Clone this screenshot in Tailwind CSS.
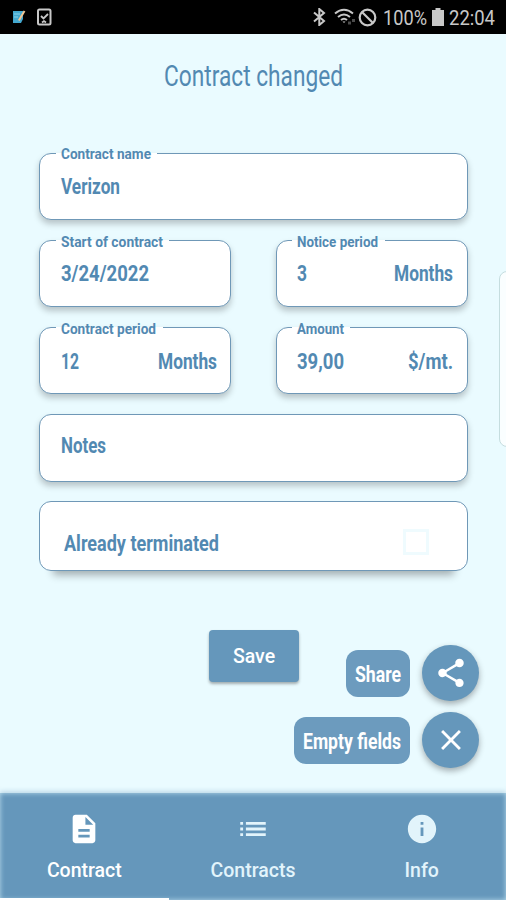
<!DOCTYPE html>
<html lang="en">
  <head>
    <meta charset="UTF-8" />
    <meta name="viewport" content="width=device-width, initial-scale=1.0" />
    <title>Contract changed</title>
    <script src="https://cdn.jsdelivr.net/npm/@tailwindcss/browser@4"></script>
  </head>
  <body class="relative flex h-[900px] w-[506px] flex-col overflow-hidden bg-[#eafbff] font-['Roboto',sans-serif] text-[#5289b2]">
    <!-- status bar -->
    <div class="flex h-[34px] shrink-0 items-center bg-black pl-3 text-[#c8c8c8]">
      <svg class="h-[18px] w-[14px]" viewBox="0 0 14 18">
        <path d="M1 3h10v8l-2 4H1z" fill="#43a8cf" />
        <path d="M2 6h6M2 9h4" stroke="#8bd2e8" />
        <path d="M12.500 3 6.800 12.500" stroke="#f0c795" stroke-width="2" />
      </svg>
      <svg class="ml-[11px] h-[18px] w-[15px]" viewBox="0 0 15 18">
        <rect x="1" y="1.500" width="12.500" height="15" rx="1.500" fill="none" stroke="#c8c8c8" stroke-width="2" />
        <path d="m4 8 2.500 2.500L11 6M5 14.500l2-1.500 2 1.500" fill="none" stroke="#c8c8c8" stroke-width="1.800" />
      </svg>
      <svg class="ml-[261px] h-[18px] w-[13px]" viewBox="0 0 13 18">
        <path d="m1 4.500 10 8.500-4.700 4V1l4.700 4L1 13.500" fill="none" stroke="#c8c8c8" stroke-width="2" />
      </svg>
      <svg class="ml-[8px] h-[18px] w-[23px]" viewBox="0 0 23 18" fill="none" stroke="#c8c8c8" stroke-width="2">
        <path d="M1 5.500q9-7.500 18 0M4 9q6-5 12 0M7 12q3-2.500 6 0" />
        <path d="m8.500 13.500 1.500 1.500 1.500-1.500z" fill="#c8c8c8" stroke="none" />
        <path d="M14 15h3M18 12.500h3" stroke="#4b4b4b" stroke-width="3" />
      </svg>
      <svg class="ml-[1px] h-[19px] w-[19px]" viewBox="0 0 19 19" fill="none" stroke="#c8c8c8" stroke-width="2.200">
        <circle cx="9.500" cy="9.500" r="7.800" />
        <path d="m4 4 11 11" />
      </svg>
      <svg class="ml-[6px] h-[18px] w-[44px] overflow-visible" fill="currentColor">
        <text x="0" y="17" font-size="20.500" textLength="44" lengthAdjust="spacingAndGlyphs">100%</text>
      </svg>
      <svg class="ml-[5px] h-[18px] w-[12px]" viewBox="0 0 12 18">
        <path d="M3.500 0h5v2H12v16H0V2h3.500z" fill="#c8c8c8" />
      </svg>
      <svg class="ml-[5px] h-[18px] w-[46px] overflow-visible" fill="currentColor">
        <text x="0" y="17" font-size="20.500" textLength="46" lengthAdjust="spacingAndGlyphs">22:04</text>
      </svg>
    </div>

    <!-- title -->
    <h1 class="flex h-[119px] shrink-0 justify-center pt-[22px]">
      <svg class="h-[30px] w-[179px] overflow-visible" fill="currentColor">
        <text x="0" y="30" font-size="30" textLength="179" lengthAdjust="spacingAndGlyphs">Contract changed</text>
      </svg>
    </h1>

    <!-- form -->
    <main class="flex h-[640px] shrink-0 flex-col px-[39px] font-bold">
      <div class="relative h-[67px] w-[429px] rounded-xl border border-[#6f98b7] bg-white px-[21px] pt-5 shadow-[0_4px_6px_#00000038]">
        <span class="absolute -top-px left-4 h-px w-[101px] bg-white"></span>
        <svg class="absolute -top-[10px] left-[21px] h-4 w-[90px] overflow-visible" fill="currentColor">
          <text x="0" y="15" font-size="15.500" textLength="90" lengthAdjust="spacingAndGlyphs">Contract name</text>
        </svg>
        <svg class="h-5 w-[59px] overflow-visible" fill="currentColor">
          <text x="0" y="20" font-size="22" textLength="59" lengthAdjust="spacingAndGlyphs">Verizon</text>
        </svg>
      </div>

      <div class="mt-5 flex w-[429px] justify-between">
        <div class="relative h-[67px] w-[192px] rounded-xl border border-[#6f98b7] bg-white px-[21px] pt-5 shadow-[0_4px_6px_#00000038]">
          <span class="absolute -top-px left-4 h-px w-[113px] bg-white"></span>
          <svg class="absolute -top-[10px] left-[21px] h-4 w-[102px] overflow-visible" fill="currentColor">
            <text x="0" y="15.500" font-size="15.500" textLength="102" lengthAdjust="spacingAndGlyphs">Start of contract</text>
          </svg>
          <svg class="h-5 w-[88px] overflow-visible" fill="currentColor">
            <text x="0" y="20" font-size="22" textLength="88" lengthAdjust="spacingAndGlyphs">3/24/2022</text>
          </svg>
        </div>
        <div class="relative flex h-[67px] w-[192px] justify-between rounded-xl border border-[#6f98b7] bg-white pt-5 pr-[14px] pl-5 shadow-[0_4px_6px_#00000038]">
          <span class="absolute -top-px left-[15px] h-px w-[93px] bg-white"></span>
          <svg class="absolute -top-[10px] left-5 h-4 w-[81px] overflow-visible" fill="currentColor">
            <text x="0" y="15.500" font-size="15.500" textLength="81" lengthAdjust="spacingAndGlyphs">Notice period</text>
          </svg>
          <svg class="h-5 w-[10px] overflow-visible" fill="currentColor">
            <text x="0" y="20" font-size="22" textLength="10" lengthAdjust="spacingAndGlyphs">3</text>
          </svg>
          <svg class="h-5 w-[59px] overflow-visible" fill="currentColor">
            <text x="0" y="20" font-size="22" textLength="59" lengthAdjust="spacingAndGlyphs">Months</text>
          </svg>
        </div>
      </div>

      <div class="mt-5 flex w-[429px] justify-between">
        <div class="relative flex h-[67px] w-[192px] justify-between rounded-xl border border-[#6f98b7] bg-white pt-5 pr-[13px] pl-[21px] shadow-[0_4px_6px_#00000038]">
          <span class="absolute -top-px left-4 h-px w-[107px] bg-white"></span>
          <svg class="absolute -top-[10px] left-[21px] h-4 w-[95px] overflow-visible" fill="currentColor">
            <text x="0" y="15.500" font-size="15.500" textLength="95" lengthAdjust="spacingAndGlyphs">Contract period</text>
          </svg>
          <svg class="h-5 w-[18px] overflow-visible" fill="currentColor">
            <text x="0" y="20.500" font-size="22" textLength="18" lengthAdjust="spacingAndGlyphs">12</text>
          </svg>
          <svg class="h-5 w-[59px] overflow-visible" fill="currentColor">
            <text x="0" y="20.500" font-size="22" textLength="59" lengthAdjust="spacingAndGlyphs">Months</text>
          </svg>
        </div>
        <div class="relative flex h-[67px] w-[192px] justify-between rounded-xl border border-[#6f98b7] bg-white pt-5 pr-[14px] pl-5 shadow-[0_4px_6px_#00000038]">
          <span class="absolute -top-px left-[15px] h-px w-[58px] bg-white"></span>
          <svg class="absolute -top-[10px] left-5 h-4 w-[47px] overflow-visible" fill="currentColor">
            <text x="0" y="15.500" font-size="15.500" textLength="47" lengthAdjust="spacingAndGlyphs">Amount</text>
          </svg>
          <svg class="h-5 w-[47px] overflow-visible" fill="currentColor">
            <text x="0" y="20.500" font-size="22" textLength="47" lengthAdjust="spacingAndGlyphs">39,00</text>
          </svg>
          <svg class="h-5 w-[45px] overflow-visible" fill="currentColor">
            <text x="0" y="20.500" font-size="22" textLength="45" lengthAdjust="spacingAndGlyphs">$/mt.</text>
          </svg>
        </div>
      </div>

      <div class="mt-5 h-[68px] w-[429px] shrink-0 rounded-xl border border-[#6f98b7] bg-white px-[21px] pt-[18px] shadow-[0_4px_6px_#00000038]">
        <svg class="h-5 w-[45px] overflow-visible" fill="currentColor">
          <text x="0" y="20" font-size="22" textLength="45" lengthAdjust="spacingAndGlyphs">Notes</text>
        </svg>
      </div>

      <div class="mt-[19px] flex h-[70px] w-[429px] shrink-0 justify-between rounded-xl border border-[#6f98b7] bg-white pt-[27px] pr-[38px] pl-6 shadow-[0_18px_8px_-14px_#00000050]">
        <svg class="h-[22px] w-[155px] overflow-visible" fill="currentColor">
          <text x="0" y="22" font-size="22" textLength="155" lengthAdjust="spacingAndGlyphs">Already terminated</text>
        </svg>
        <span class="h-[26px] w-[26px] border-3 border-[#effbfe]"></span>
      </div>

      <!-- actions -->
      <div class="mt-[59px] flex">
        <button class="ml-[170px] h-[52px] w-[90px] shrink-0 rounded bg-[#6597bb] pt-px text-[19.5px] font-medium text-white shadow-[0_2px_3px_#00000050]">Save</button>
        <div class="mt-[15px] -mr-3 ml-auto flex shrink-0 flex-col items-end gap-[11px] text-white">
          <div class="-ml-[140px] flex items-center gap-3">
            <div class="flex h-[47px] w-[64px] items-center justify-center rounded-xl bg-[#6c9bbe]">
              <svg class="h-[22px] w-[46px] overflow-visible" fill="currentColor">
                <text x="0" y="20" font-size="22" textLength="46" lengthAdjust="spacingAndGlyphs">Share</text>
              </svg>
            </div>
            <div class="flex h-14 w-[57px] items-center justify-center rounded-full bg-[#6597bb] shadow-[0_3px_6px_#00000050]">
              <svg class="h-[34px] w-[34px]" viewBox="0 0 24 24" fill="#fff">
                <path d="M18 16.080c-.76 0-1.440.3-1.960.77L8.910 12.700c.05-.23.09-.46.09-.7s-.04-.47-.09-.7l7.050-4.110c.54.5 1.250.81 2.040.81 1.660 0 3-1.340 3-3s-1.340-3-3-3-3 1.340-3 3c0 .24.04.47.09.7L8.040 9.810C7.500 9.310 6.790 9 6 9c-1.660 0-3 1.340-3 3s1.340 3 3 3c.79 0 1.500-.31 2.040-.81l7.120 4.160c-.05.21-.08.43-.08.65 0 1.610 1.310 2.920 2.920 2.920s2.920-1.310 2.920-2.920-1.310-2.920-2.920-2.920z" />
              </svg>
            </div>
          </div>
          <div class="-ml-[140px] flex items-center gap-3">
            <div class="flex h-[47px] w-[116px] items-center justify-center rounded-xl bg-[#6c9bbe]">
              <svg class="h-[22px] w-[98px] overflow-visible" fill="currentColor">
                <text x="0" y="20" font-size="22" textLength="98" lengthAdjust="spacingAndGlyphs">Empty fields</text>
              </svg>
            </div>
            <div class="flex h-14 w-[57px] items-center justify-center rounded-full bg-[#6597bb] shadow-[0_3px_6px_#00000050]">
              <svg class="h-[34px] w-[34px]" viewBox="0 0 24 24" fill="#fff">
                <path d="M19 6.410 17.590 5 12 10.590 6.410 5 5 6.410 10.590 12 5 17.590 6.410 19 12 13.410 17.590 19 19 17.590 13.410 12z" />
              </svg>
            </div>
          </div>
        </div>
      </div>
    </main>

    <!-- edge panel handle -->
    <div class="absolute top-[271px] left-[499px] h-[176px] w-5 rounded-lg border border-[#c5dddf] bg-[#fafeff]"></div>

    <!-- bottom navigation -->
    <nav class="relative grid h-[107px] shrink-0 grid-cols-3 bg-[#6597bb] text-[19.5px] font-medium text-[#e2f4fb] shadow-[0_-1px_5px_#6597bb70,inset_0_0_5px_#b9dcec]">
      <div class="flex flex-col items-center border-b-2 border-white pt-[19px] text-white">
        <svg class="h-[34px] w-[34px]" viewBox="0 0 24 24" fill="currentColor">
          <path d="M14 2H6c-1.100 0-1.990.9-1.990 2L4 20c0 1.100.89 2 1.990 2H18c1.100 0 2-.9 2-2V8l-6-6zm2 16H8v-2h8v2zm0-4H8v-2h8v2zm-3-5V3.500L18.500 9H13z" />
        </svg>
        <span class="mt-[11px] leading-7">Contract</span>
      </div>
      <div class="flex flex-col items-center pt-[19px]">
        <svg class="h-[34px] w-[34px]" viewBox="0 0 24 24" fill="currentColor">
          <path d="M3 13h2v-2H3v2zm0 4h2v-2H3v2zm0-8h2V7H3v2zm4 4h14v-2H7v2zm0 4h14v-2H7v2zM7 7v2h14V7H7z" />
        </svg>
        <span class="mt-[11px] leading-7">Contracts</span>
      </div>
      <div class="flex flex-col items-center pt-[19px]">
        <svg class="h-[34px] w-[34px]" viewBox="0 0 24 24" fill="currentColor">
          <path d="M12 2C6.480 2 2 6.480 2 12s4.480 10 10 10 10-4.480 10-10S17.520 2 12 2zm1 15h-2v-6h2v6zm0-8h-2V7h2v2z" />
        </svg>
        <span class="mt-[11px] leading-7">Info</span>
      </div>
    </nav>
  </body>
</html>
